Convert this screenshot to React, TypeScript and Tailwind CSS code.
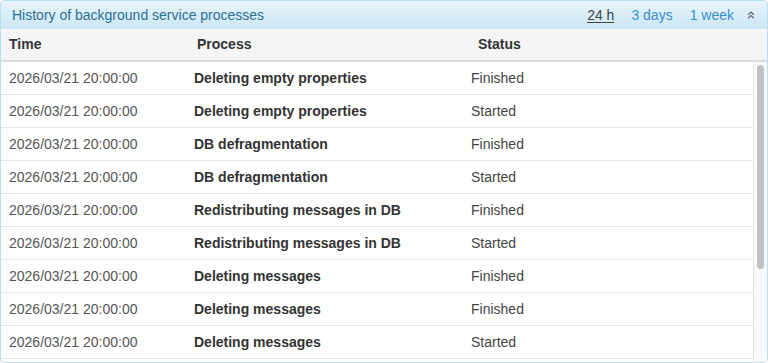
import { ChevronsUp } from "lucide-react";

type Row = { time: string; process: string; status: string };

const rows: Row[] = [
  { time: "2026/03/21 20:00:00", process: "Deleting empty properties", status: "Finished" },
  { time: "2026/03/21 20:00:00", process: "Deleting empty properties", status: "Started" },
  { time: "2026/03/21 20:00:00", process: "DB defragmentation", status: "Finished" },
  { time: "2026/03/21 20:00:00", process: "DB defragmentation", status: "Started" },
  { time: "2026/03/21 20:00:00", process: "Redistributing messages in DB", status: "Finished" },
  { time: "2026/03/21 20:00:00", process: "Redistributing messages in DB", status: "Started" },
  { time: "2026/03/21 20:00:00", process: "Deleting messages", status: "Finished" },
  { time: "2026/03/21 20:00:00", process: "Deleting messages", status: "Finished" },
  { time: "2026/03/21 20:00:00", process: "Deleting messages", status: "Started" },
];

export default function App() {
  return (
    <div
      className="h-[363px] w-[768px] bg-white"
      style={{ fontFamily: '"Liberation Sans", Arial, sans-serif' }}
    >
      <div className="flex h-[363px] flex-col overflow-hidden rounded-[4px] border border-[#b5e0ee]">
        {/* panel header */}
        <div className="flex h-[28px] shrink-0 items-center bg-gradient-to-b from-[#e6f4fa] to-[#cce7f3] pl-[11px] pr-[10px]">
          <div className="flex-1 text-[14px] text-[#2f6f95]">History of background service processes</div>
          <div className="flex items-center text-[14px]">
            <span className="text-[#444] underline underline-offset-2">24 h</span>
            <span className="ml-[17px] text-[#3b8fd2]">3 days</span>
            <span className="ml-[17px] text-[#3b8fd2]">1 week</span>
            <ChevronsUp size={12} strokeWidth={2.25} className="ml-[11px] text-[#666]" />
          </div>
        </div>

        {/* column headers */}
        <div className="flex h-[33px] shrink-0 items-center border-b-2 border-[#dcdcdc] bg-[#f5f5f5] text-[14px] font-bold text-[#333]">
          <div className="w-[188px] pl-[8px]">Time</div>
          <div className="w-[281px] pl-[8px]">Process</div>
          <div className="pl-[8px]">Status</div>
        </div>

        {/* body */}
        <div className="flex min-h-0 flex-1">
          <div className="min-w-0 flex-1 overflow-hidden">
            {rows.map((r, i) => (
              <div key={i} className="flex h-[33px] items-center border-b border-[#e6e6e6] text-[14px] text-[#444]">
                <div className="w-[185px] pl-[8px] text-[#555]">{r.time}</div>
                <div className="w-[277px] pl-[8px] font-bold text-[#333]">{r.process}</div>
                <div className="pl-[8px]">{r.status}</div>
              </div>
            ))}
          </div>
          <div className="w-[14px] shrink-0 border-l border-[#e4e4e4] bg-[#fafafa] px-[3px] pt-[3px]">
            <div className="h-[204px] w-full rounded-full bg-[#c2c2c2]" />
          </div>
        </div>
      </div>
    </div>
  );
}
